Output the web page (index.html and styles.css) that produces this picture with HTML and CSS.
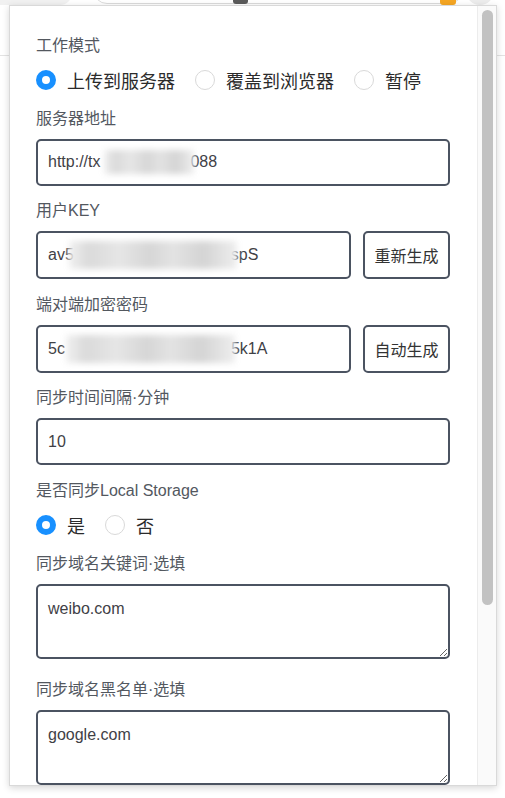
FILE: index.html
```html
<!DOCTYPE html>
<html lang="zh-CN">
<head>
<meta charset="utf-8">
<title>同步设置</title>
<link rel="stylesheet" href="styles.css">
</head>
<body>
<header class="toolbar">
  <div class="tab"></div>
  <div class="omnibox">
    <span class="site-icon"></span>
    <span class="ext-icon"></span>
  </div>
  <div class="avatar"></div>
</header>

<div class="popup">
  <main class="content">
    <div class="label">工作模式</div>
    <div class="radios">
      <label class="opt"><input type="radio" name="mode" checked><span>上传到服务器</span></label>
      <label class="opt"><input type="radio" name="mode"><span>覆盖到浏览器</span></label>
      <label class="opt"><input type="radio" name="mode"><span>暂停</span></label>
    </div>

    <div class="label">服务器地址</div>
    <div class="field">http://tx<span class="blur b1"></span>088</div>

    <div class="label">用户KEY</div>
    <div class="row">
      <div class="field">av5<span class="blur b2"></span>spS</div>
      <button class="btn">重新生成</button>
    </div>

    <div class="label">端对端加密密码</div>
    <div class="row">
      <div class="field">5c<span class="blur b3"></span>5k1A</div>
      <button class="btn">自动生成</button>
    </div>

    <div class="label">同步时间间隔·分钟</div>
    <div class="field">10</div>

    <div class="label">是否同步Local Storage</div>
    <div class="radios">
      <label class="opt"><input type="radio" name="ls" checked><span>是</span></label>
      <label class="opt"><input type="radio" name="ls"><span>否</span></label>
    </div>

    <div class="label">同步域名关键词·选填</div>
    <textarea class="area">weibo.com</textarea>

    <div class="label">同步域名黑名单·选填</div>
    <textarea class="area">google.com</textarea>
  </main>
  <div class="scrollbar"><div class="thumb"></div></div>
</div>
</body>
</html>
```

FILE: styles.css
```css
html, body {
  margin: 0;
  padding: 0;
}
body {
  width: 505px;
  height: 798px;
  overflow: hidden;
  position: relative;
  background: #ffffff;
  font-family: "Liberation Sans", "Noto Sans CJK SC", sans-serif;
}

/* browser chrome behind the popup */
.toolbar {
  height: 55px;
  border-bottom: 1px solid #e3e3e3;
  display: flex;
  align-items: flex-start;
}
.tab {
  width: 72px;
  height: 30px;
  margin-top: -25px;
  background: #f1f1f1;
  border-radius: 0 0 12px 0;
}
.omnibox {
  margin-left: 21px;
  width: 370px;
  height: 30px;
  margin-top: -26px;
  box-sizing: border-box;
  border: 1px solid #dcdcdc;
  border-radius: 0 0 14px 14px;
  background: #fff;
  display: flex;
  align-items: flex-end;
}
.site-icon {
  margin-left: 139px;
  margin-bottom: -1px;
  width: 15px;
  height: 14px;
  background: #5b5b5b;
  border-radius: 3px;
}
.ext-icon {
  margin-left: 192px;
  margin-bottom: -2px;
  width: 16px;
  height: 14px;
  background: #f5a623;
  border-radius: 3px;
}
.avatar {
  margin-left: 3px;
  margin-top: -23px;
  width: 28px;
  height: 28px;
  border-radius: 50%;
  background: #ececec;
}

/* popup window */
.popup {
  position: absolute;
  left: 9px;
  top: 5px;
  width: 488px;
  height: 781px;
  box-sizing: border-box;
  border: 1px solid #d9d9d9;
  background: #fff;
  box-shadow: 0 2px 7px rgba(0, 0, 0, 0.16);
  display: flex;
  overflow: hidden;
}
.content {
  flex: 1;
  min-width: 0;
  padding: 29px 27px 0 26px;
  display: flex;
  flex-direction: column;
}
.scrollbar {
  width: 18px;
  flex: none;
  border-left: 1px solid #ececec;
  background: #fafafa;
}
.thumb {
  margin: 4px 0 0 4px;
  width: 11px;
  height: 595px;
  border-radius: 6px;
  background: #c2c2c2;
}

.label {
  font-size: 16px;
  line-height: 22px;
  height: 22px;
  color: #53585f;
  white-space: nowrap;
}

.radios {
  display: flex;
  align-items: center;
  gap: 20px;
  height: 30px;
  margin-top: 8px;
}
.radios + .label {
  margin-top: 13.5px;
}
.opt {
  display: flex;
  align-items: center;
  gap: 11px;
  font-size: 18px;
  color: #2b2b2b;
}
.opt input {
  appearance: none;
  -webkit-appearance: none;
  margin: 0;
  width: 20px;
  height: 20px;
  box-sizing: border-box;
  border-radius: 50%;
  border: 1px solid #d9d9d9;
  background: #fff;
}
.opt input:checked {
  border: 6.5px solid #1890ff;
}

.field {
  height: 48px;
  box-sizing: border-box;
  border: 2px solid #4b5361;
  border-radius: 5px;
  padding: 0 10px;
  display: flex;
  align-items: center;
  font-size: 16px;
  color: #3f4146;
  white-space: nowrap;
  overflow: hidden;
}
.label + .field,
.label + .row,
.label + .area {
  margin-top: 9px;
}
.field + .label,
.row + .label {
  margin-top: 14.5px;
}
.area + .label {
  margin-top: 20.5px;
}

.row {
  display: flex;
  gap: 12px;
}
.row .field {
  flex: 1;
}
.btn {
  width: 87px;
  height: 48px;
  flex: none;
  box-sizing: border-box;
  border: 2px solid #4b5361;
  border-radius: 5px;
  background: #fff;
  font-family: inherit;
  font-size: 16px;
  color: #333;
  padding: 0;
}

.blur {
  display: inline-block;
  position: relative;
  z-index: 1;
  height: 28px;
  background: linear-gradient(90deg, #f0f0f0 0%, #dadada 12%, #e6e6e6 30%, #d6d6d6 48%, #e3e3e3 62%, #d4d4d4 80%, #eeeeee 100%);
  filter: blur(3px);
}
.b1 {
  width: 90px;
  height: 24px;
  margin: 0 -4px 0 4px;
}
.b2 {
  width: 168px;
  margin: 0 -6px 0 -5px;
}
.b3 {
  width: 169px;
  margin: 0 -4px 0 1px;
}

.area {
  display: block;
  width: 100%;
  height: 76px;
  box-sizing: border-box;
  border: 2px solid #4b5361;
  border-radius: 5px;
  padding: 13px 10px 10px;
  margin: 0;
  font-family: inherit;
  font-size: 16px;
  line-height: 20px;
  color: #3f4146;
  resize: vertical;
  background: #fff;
}
```
